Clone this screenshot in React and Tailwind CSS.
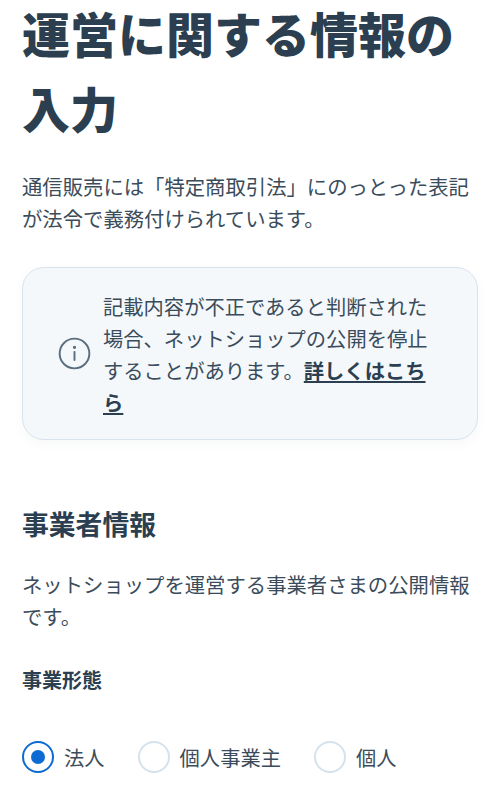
export default function App() {
  return (
    <div className="w-[500px] h-[797px] overflow-hidden bg-white text-[#2b3f50] px-[22px] font-['Noto_Sans_CJK_JP','Noto_Sans',sans-serif]">
      <h1 className="text-[48px] leading-[75px] font-black -mt-[5px]">運営に関する情報の入力</h1>
      <p className="text-[20.35px] leading-[32px] mt-[25px] text-[#3a4c5b]">通信販売には「特定商取引法」にのっとった表記が法令で義務付けられています。</p>

      <div className="mt-[33px] h-[173px] rounded-[22px] border border-[#d9e3ec] bg-[#f4f8fb] shadow-[0_4px_12px_rgba(40,70,100,0.04)] flex items-center pl-[35px] pr-[40px]">
        <svg className="w-[33px] h-[33px] shrink-0 text-[#5a6e80]" viewBox="0 0 24 24" fill="none" stroke="currentColor" strokeWidth="1.4" strokeLinecap="round">
          <circle cx="12" cy="12" r="10.8" />
          <path d="M12 10.8v6" />
          <circle cx="12" cy="7.5" r="0.5" fill="currentColor" />
        </svg>
        <p className="text-[20.3px] leading-[32px] ml-[12px] text-[#3a4c5b]">
          記載内容が不正であると判断された場合、ネットショップの公開を停止することがあります。<a className="font-bold underline text-[#2b3f50]">詳しくはこちら</a>
        </p>
      </div>

      <h2 className="text-[26.8px] leading-[40px] font-bold mt-[64px]">事業者情報</h2>
      <p className="text-[20.35px] leading-[32px] mt-[24px] text-[#3a4c5b]">ネットショップを運営する事業者さまの公開情報です。</p>
      <h3 className="text-[20px] leading-[30px] font-bold mt-[33px]">事業形態</h3>

      <div className="flex items-center mt-[46px] text-[20.3px] text-[#3a4c5b]">
        <span className="w-[32px] h-[32px] rounded-full border-[2.5px] border-[#0b6bd3] bg-white flex items-center justify-center">
          <span className="w-[14px] h-[14px] rounded-full bg-[#0b6bd3]" />
        </span>
        <span className="ml-[10px]">法人</span>
        <span className="w-[32px] h-[32px] rounded-full border-2 border-[#d5e2ec] ml-[33px]" />
        <span className="ml-[10px]">個人事業主</span>
        <span className="w-[32px] h-[32px] rounded-full border-2 border-[#d5e2ec] ml-[33px]" />
        <span className="ml-[10px]">個人</span>
      </div>
    </div>
  );
}
